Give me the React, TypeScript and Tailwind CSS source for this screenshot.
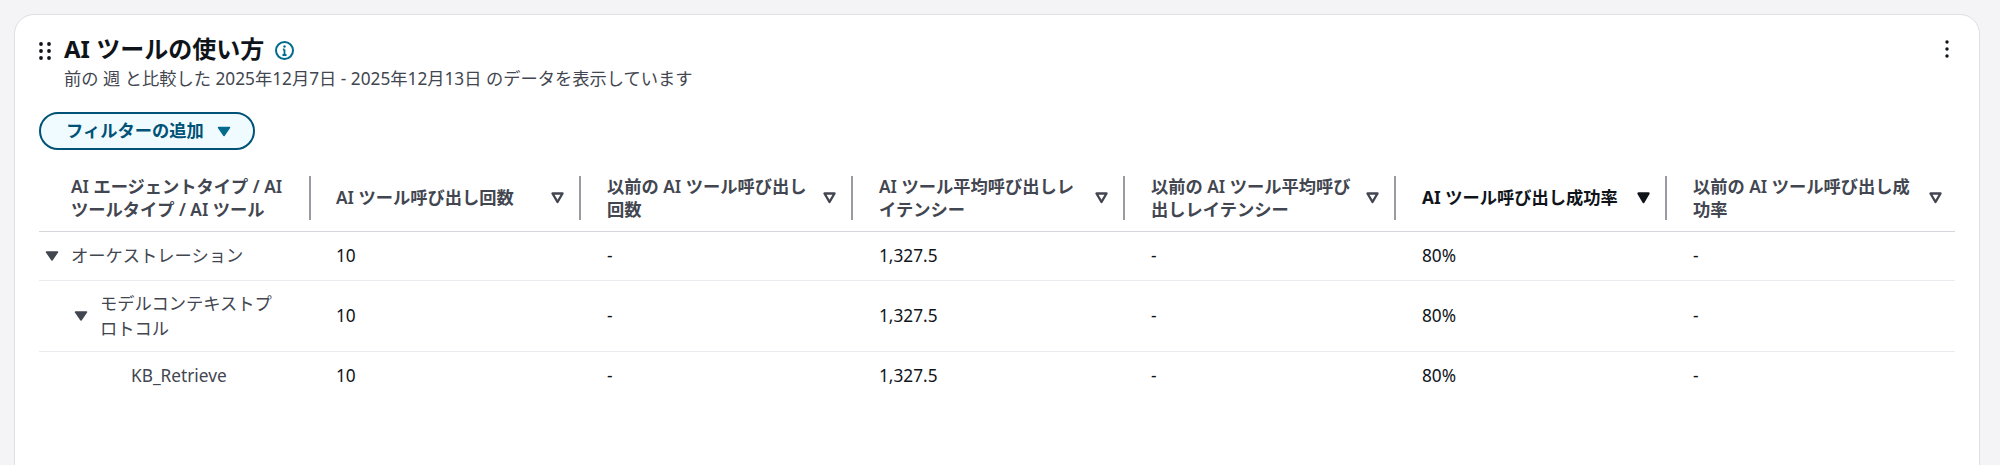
import React from "react";

const columns = [
  { label: "AI ツール呼び出し回数" },
  { label: "以前の AI ツール呼び出し回数" },
  { label: "AI ツール平均呼び出しレイテンシー" },
  { label: "以前の AI ツール平均呼び出しレイテンシー" },
  { label: "AI ツール呼び出し成功率", sorted: true },
  { label: "以前の AI ツール呼び出し成功率" },
];

const rows = [
  { name: "オーケストレーション", indent: "pl-[32px]", arrow: true, border: true, height: "h-[49px]" },
  { name: "モデルコンテキストプロトコル", indent: "pl-[61px]", arrow: true, border: true, height: "h-[71px]" },
  { name: "KB_Retrieve", indent: "pl-[92px]", arrow: false, border: false, height: "h-[49px]" },
];

const values = ["10", "-", "1,327.5", "-", "80%", "-"];

const SortIcon = ({ active }: { active?: boolean }) => (
  <svg width="15" height="13" viewBox="0 0 15 13" className="shrink-0">
    <path
      d="M2.5 2.5h10L7.5 11z"
      fill={active ? "#0f141a" : "none"}
      stroke={active ? "#0f141a" : "#424650"}
      strokeWidth="2.4"
      strokeLinejoin="round"
    />
  </svg>
);

const CaretIcon = ({ color }: { color: string }) => (
  <svg width="14" height="11" viewBox="0 0 14 11" className="shrink-0">
    <path d="M1.5 1.5h11L7 9.5z" fill={color} stroke={color} strokeWidth="1.5" strokeLinejoin="round" />
  </svg>
);

const DragHandle = () => (
  <svg width="12" height="18" viewBox="0 0 12 18" className="mt-[7px] shrink-0" fill="#0f141a">
    {[2, 9, 16].map((y) => (
      <React.Fragment key={y}>
        <circle cx="2" cy={y} r="1.9" />
        <circle cx="10" cy={y} r="1.9" />
      </React.Fragment>
    ))}
  </svg>
);

const MoreIcon = () => (
  <svg width="6" height="18" viewBox="0 0 6 18" className="mt-[5px] mr-[6px] shrink-0" fill="#0f141a">
    <circle cx="3" cy="2" r="1.7" />
    <circle cx="3" cy="9" r="1.7" />
    <circle cx="3" cy="16" r="1.7" />
  </svg>
);

export default function App() {
  return (
    <div className="h-[465px] overflow-hidden bg-[#f4f4f7] pl-[14px] pr-[20px] pt-[14px] font-['Noto_Sans','Noto_Sans_CJK_JP',sans-serif]">
      <div className="h-[480px] rounded-[20px] border border-[#dedee3] bg-white pl-[24px] pr-[23px] pt-[20px]">
        <div className="flex items-start justify-between">
          <div className="flex items-start">
            <DragHandle />
            <div className="ml-[13px]">
              <div className="flex h-[28px] items-center gap-[10px]">
                <h2 className="text-[24px] leading-[28px] font-bold text-[#0f141a]">AI ツールの使い方</h2>
                <svg width="21" height="21" viewBox="0 0 21 21" className="mt-[3px]">
                  <circle cx="10.5" cy="10.5" r="8.5" fill="none" stroke="#006b8f" strokeWidth="2" />
                  <path d="M10.5 9.5v5.5M8.5 15h4M8.9 9.5h1.6" fill="none" stroke="#006b8f" strokeWidth="1.8" />
                  <circle cx="10.5" cy="6.5" r="1.2" fill="#006b8f" />
                </svg>
              </div>
              <p className="mt-[6px] text-[17.25px] leading-[20px] text-[#424650]">
                前の 週 と比較した 2025年12月7日 - 2025年12月13日 のデータを表示しています
              </p>
            </div>
          </div>
          <MoreIcon />
        </div>

        <button className="mt-[23px] flex h-[38px] items-center gap-[13px] rounded-full border-2 border-[#005276] bg-[#f0fbff] pl-[25px] pr-[22px] text-[17.25px] leading-[20px] font-semibold text-[#005276]">
          フィルターの追加
          <CaretIcon color="#006b8f" />
        </button>

        <table className="mt-[21px] w-[1916px] table-fixed border-collapse text-[17.25px] leading-[25px] text-[#0f141a]">
          <colgroup>
            <col className="w-[271px]" />
            <col className="w-[271px]" />
            <col className="w-[272px]" />
            <col className="w-[272px]" />
            <col className="w-[271px]" />
            <col className="w-[271px]" />
            <col className="w-[288px]" />
          </colgroup>
          <thead>
            <tr className="border-b border-[#d6d6dc]">
              <th className="h-[60px] pb-[6px] pl-[32px] pr-[24px] text-left align-middle text-[17.25px] leading-[23px] font-semibold text-[#424650]">
                <div className="relative flex h-[44px] items-center">
                  <span>AI エージェントタイプ / AI ツールタイプ / AI ツール</span>
                  <span className="absolute right-[-25px] top-0 h-[44px] w-[2px] bg-[#9a9aa2]" />
                </div>
              </th>
              {columns.map((col, i) => (
                <th
                  key={col.label}
                  className={`h-[60px] pb-[6px] pl-[26px] text-left align-middle text-[17.25px] leading-[23px] ${
                    col.sorted ? "font-bold text-[#0f141a]" : "font-semibold text-[#424650]"
                  }`}
                >
                  <div
                    className={`relative flex h-[44px] items-center justify-between gap-[10px] ${
                      i === columns.length - 1 ? "pr-[12px]" : "pr-[16px]"
                    }`}
                  >
                    <span>{col.label}</span>
                    <SortIcon active={col.sorted} />
                    {i < columns.length - 1 && (
                      <span className="absolute right-0 top-0 h-[44px] w-[2px] bg-[#9a9aa2]" />
                    )}
                  </div>
                </th>
              ))}
            </tr>
          </thead>
          <tbody>
            {rows.map((row) => (
              <tr key={row.name} className={row.border ? "border-b border-[#ebebf0]" : ""}>
                <td className={`${row.height} ${row.indent} pr-[30px] align-middle`}>
                  <div className="relative flex items-center">
                    {row.arrow && (
                      <span className="absolute left-[-26px] top-1/2 -translate-y-1/2">
                        <CaretIcon color="#424650" />
                      </span>
                    )}
                    <span className="text-[#424650]">{row.name}</span>
                  </div>
                </td>
                {values.map((v, i) => (
                  <td key={i} className="pl-[26px] align-middle text-[#0f141a]">
                    {v}
                  </td>
                ))}
              </tr>
            ))}
          </tbody>
        </table>
      </div>
    </div>
  );
}
